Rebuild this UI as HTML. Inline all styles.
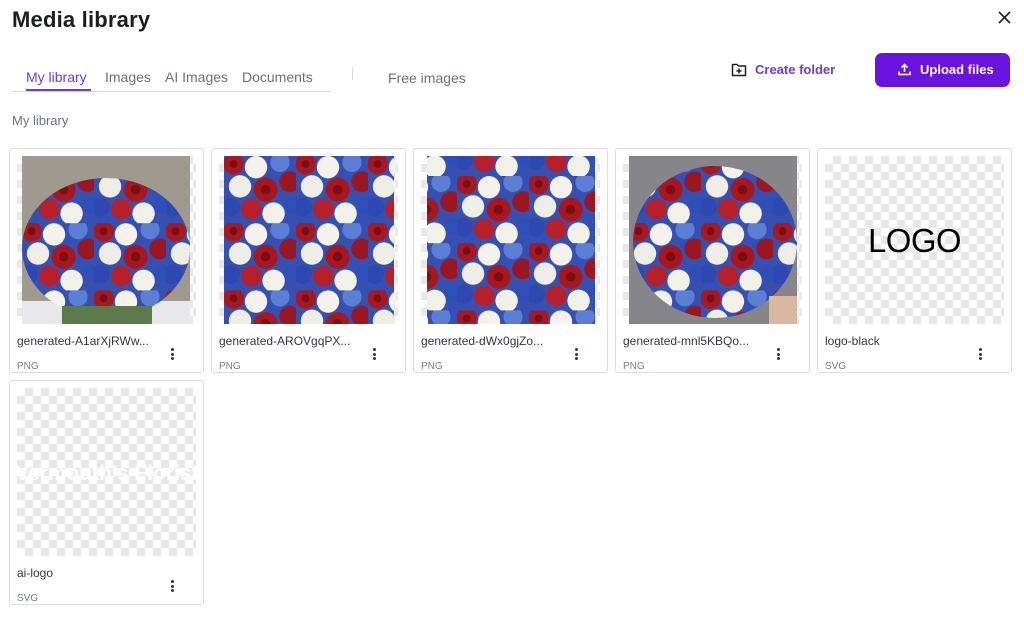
<!DOCTYPE html>
<html><head><meta charset="utf-8"><style>
*{margin:0;padding:0;box-sizing:border-box}
body{width:1024px;height:630px;background:#fff;font-family:"Liberation Sans",sans-serif;position:relative;overflow:hidden;color:#1d1e20}
.abs{position:absolute}
h1{position:absolute;left:12px;top:7px;font-size:22px;font-weight:bold;letter-spacing:.2px}
.tab{position:absolute;top:69px;font-size:14px;color:#6d6f80}
.card{position:absolute;width:195px;height:225px;border:1px solid #dcdde3;border-radius:3px;background:#fff}
.thumb{position:absolute;left:7px;top:7px;width:179px;height:168px;border-radius:3px;overflow:hidden;
background-color:#fff;background-image:linear-gradient(45deg,#e8e8e8 25%,transparent 25%,transparent 75%,#e8e8e8 75%),linear-gradient(45deg,#e8e8e8 25%,transparent 25%,transparent 75%,#e8e8e8 75%);background-size:16px 16px;background-position:0 0,8px 8px}
.name{position:absolute;left:7px;top:185px;font-size:12px;color:#36344d}
.type{position:absolute;left:7px;top:212px;font-size:10px;color:#7a7c8c}
.dots{position:absolute;left:161px;top:199px;width:4px;height:12px}
.dots i{display:block;width:3px;height:3px;border-radius:50%;background:#36344d;margin-bottom:1.5px}
.img{position:absolute;top:0;height:168px}
</style></head><body>
<svg width="0" height="0" style="position:absolute">
<defs>
<pattern id="fl" width="90" height="84" patternUnits="userSpaceOnUse" patternTransform="scale(0.8)">
<rect width="90" height="84" fill="#3550b0"/>
<circle cx="12" cy="10" r="13" fill="#a51a22"/><circle cx="40" cy="14" r="14" fill="#f4f2ea"/>
<circle cx="70" cy="8" r="12" fill="#5a7fd4"/><circle cx="82" cy="32" r="13" fill="#9a1620"/>
<circle cx="20" cy="38" r="14" fill="#eeeee6"/><circle cx="52" cy="42" r="15" fill="#a8161e"/>
<circle cx="8" cy="64" r="12" fill="#2d48b0"/><circle cx="34" cy="66" r="13" fill="#b5202a"/>
<circle cx="62" cy="72" r="14" fill="#f2f1e8"/><circle cx="86" cy="62" r="11" fill="#2f4fb8"/>
<circle cx="52" cy="42" r="6" fill="#7a0e14"/><circle cx="12" cy="10" r="5" fill="#7a0e14"/>
</pattern>
</defs></svg>
<h1>Media library</h1>
<svg class="abs" style="left:998px;top:11px" width="13" height="13" viewBox="0 0 13 13"><path d="M1 1L12 12M12 1L1 12" stroke="#1d1e20" stroke-width="1.6"/></svg>
<div class="tab" style="left:26px;color:#673de6">My library</div>
<div class="tab" style="left:105px">Images</div>
<div class="tab" style="left:165px">AI Images</div>
<div class="tab" style="left:242px">Documents</div>
<div class="tab" style="left:388px;top:70px">Free images</div>
<div class="abs" style="left:12px;top:91px;width:319px;height:1px;background:#dadce0"></div>
<div class="abs" style="left:26px;top:89px;width:65px;height:2px;background:#673de6"></div>
<div class="abs" style="left:352px;top:67px;width:1px;height:13px;background:#dadce0"></div>
<svg class="abs" style="left:731px;top:62px" width="16" height="15" viewBox="0 0 16 15"><path d="M1.5 2.5h4.5l1.5 1.5h7v9.5h-13z" fill="none" stroke="#1d1e20" stroke-width="1.5" stroke-linejoin="round"/><path d="M8 6.5v5M5.5 9h5" stroke="#1d1e20" stroke-width="1.5"/></svg>
<div class="abs" style="left:755px;top:62px;font-size:13px;font-weight:bold;color:#673de6">Create folder</div>
<div class="abs" style="left:875px;top:53px;width:135px;height:34px;border-radius:7px;background:#6a12e0"></div>
<svg class="abs" style="left:898px;top:63px" width="13" height="13" viewBox="0 0 13 13"><path d="M6.5 9V1.5M3.5 4.5l3-3 3 3M1 8.5v3h11v-3" fill="none" stroke="#fff" stroke-width="1.6"/></svg>
<div class="abs" style="left:920px;top:62px;font-size:13px;font-weight:bold;color:#fff">Upload files</div>
<div class="abs" style="left:12px;top:113px;font-size:13px;color:#6d6f80">My library</div>

<div class="card" style="left:9px;top:148px"><div class="thumb"><svg class="img" style="left:5px" width="168" height="168"><rect width="168" height="168" fill="#a09a8e"/><rect y="145" width="168" height="23" fill="#e8e8ea"/><ellipse cx="84" cy="92" rx="84" ry="70" fill="url(#fl)"/><rect x="40" y="150" width="90" height="18" fill="#5d7a4a"/></svg></div>
<div class="name">generated-A1arXjRWw...</div><div class="dots"><i></i><i></i><i></i></div><div class="type">PNG</div></div>

<div class="card" style="left:211px;top:148px"><div class="thumb"><svg class="img" style="left:5px" width="170" height="168"><rect width="170" height="168" fill="url(#fl)"/></svg></div>
<div class="name">generated-AROVgqPX...</div><div class="dots"><i></i><i></i><i></i></div><div class="type">PNG</div></div>

<div class="card" style="left:413px;top:148px"><div class="thumb"><svg class="img" style="left:6px" width="168" height="168"><g transform="translate(30,20)"><rect x="-30" y="-20" width="168" height="168" fill="url(#fl)"/></g></svg></div>
<div class="name">generated-dWx0gjZo...</div><div class="dots"><i></i><i></i><i></i></div><div class="type">PNG</div></div>

<div class="card" style="left:615px;top:148px"><div class="thumb"><svg class="img" style="left:6px" width="168" height="168"><rect width="168" height="168" fill="#85858a"/><ellipse cx="86" cy="86" rx="82" ry="76" fill="url(#fl)"/><rect x="140" y="140" width="28" height="28" fill="#d8b8a0"/></svg></div>
<div class="name">generated-mnl5KBQo...</div><div class="dots"><i></i><i></i><i></i></div><div class="type">PNG</div></div>

<div class="card" style="left:817px;top:148px"><div class="thumb"><div class="abs" style="left:0;width:179px;top:66px;text-align:center;font-size:33px;letter-spacing:-0.6px;color:#000">LOGO</div></div>
<div class="name">logo-black</div><div class="dots"><i></i><i></i><i></i></div><div class="type">SVG</div></div>

<div class="card" style="left:9px;top:380px"><div class="thumb"><div class="abs" style="left:-2px;top:74px;white-space:nowrap;font-size:21px;font-weight:bold;color:#fff">Vermouth's Florist</div></div>
<div class="name">ai-logo</div><div class="dots"><i></i><i></i><i></i></div><div class="type">SVG</div></div>
</body></html>
